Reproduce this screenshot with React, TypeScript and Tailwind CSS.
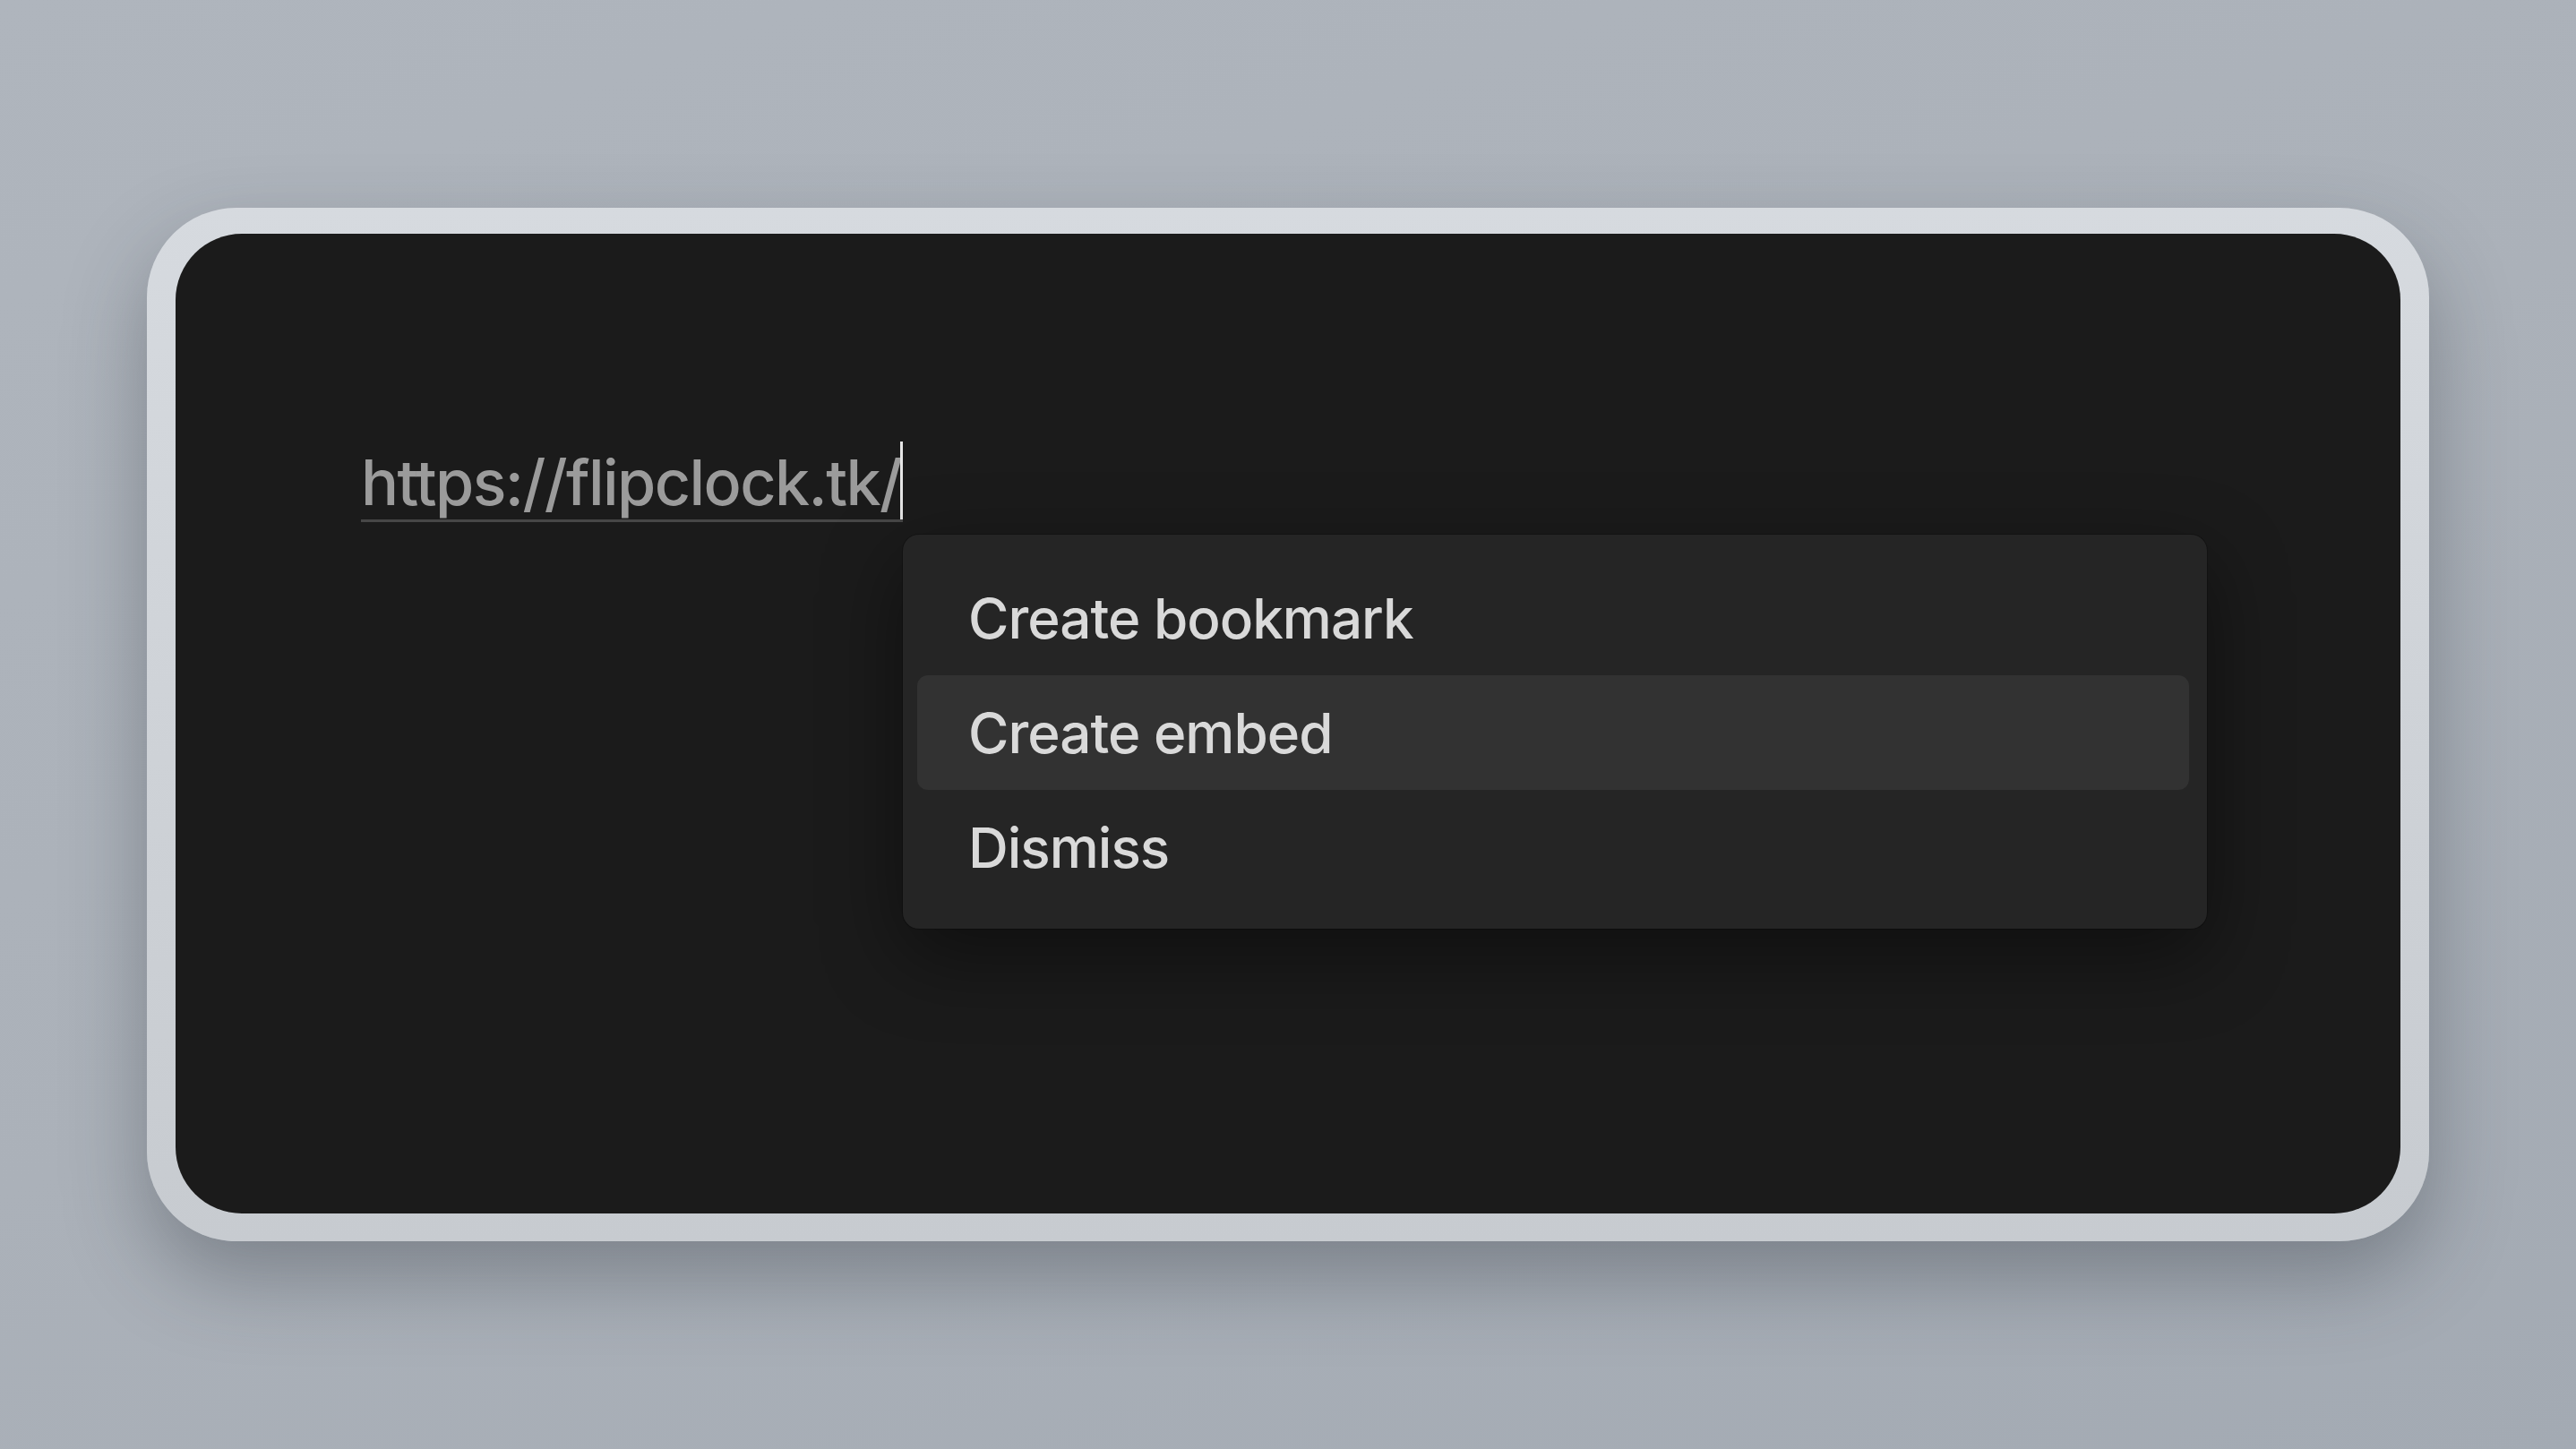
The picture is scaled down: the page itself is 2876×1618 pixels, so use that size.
import React from "react";

export default function App() {
  return (
    <div className="w-full h-screen flex items-center justify-center bg-[linear-gradient(160deg,#afb5bd_0%,#abb1b9_50%,#a3aab3_100%)] overflow-hidden" style={{ fontFamily: "Inter, 'Noto Sans', sans-serif" }}>
      <div className="w-[2548px] h-[1154px] rounded-[100px] px-[32px] pt-[29px] pb-[31px] bg-[linear-gradient(180deg,#d6dadf_0%,#c7cbd0_100%)] shadow-[0_40px_90px_rgba(40,45,55,0.35)]">
        <div className="relative w-full h-full rounded-[74px] bg-[#1b1b1b] pl-[207px] pt-[243px]">
          <span className="relative inline-block text-[70px] leading-[70px] font-medium tracking-[-1.6px] text-[#9b9b9b] pb-[6px] pr-[2px] border-b-[3px] border-[#474747]">
            https://flipclock.tk/
            <span className="absolute right-[0px] top-[-11px] w-[3px] h-[87px] bg-[#e6e6e6]" />
          </span>

          <div className="absolute left-[812px] top-[336px] w-[1456px] rounded-[18px] bg-[#252525] pl-[16px] pr-[20px] pt-[29px] pb-[27px] shadow-[0_0_0_1px_rgba(0,0,0,0.25),0_30px_90px_rgba(0,0,0,0.45)]">
            {[
              { label: "Create bookmark", active: false },
              { label: "Create embed", active: true },
              { label: "Dismiss", active: false },
            ].map((item) => (
              <div
                key={item.label}
                className={
                  item.active
                    ? "h-[128px] rounded-[12px] bg-[#323232] flex items-center pl-[57px] text-[62px] font-medium tracking-[-1px] text-[#d9d9d9]"
                    : "h-[128px] rounded-[12px] flex items-center pl-[57px] text-[62px] font-medium tracking-[-1px] text-[#d9d9d9]"
                }
              >
                {item.label}
              </div>
            ))}
          </div>
        </div>
      </div>
    </div>
  );
}
